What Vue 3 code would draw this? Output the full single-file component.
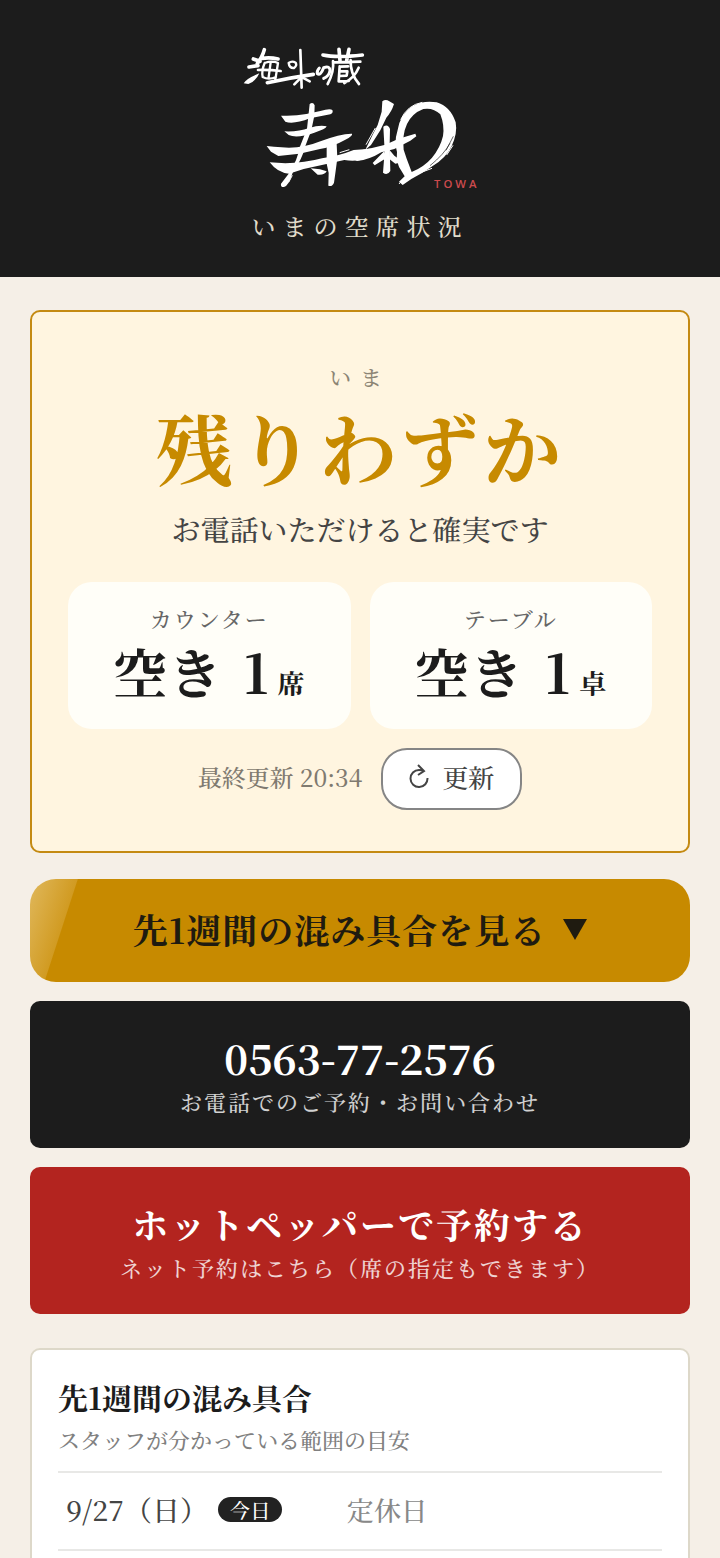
<script setup>
import { ref } from 'vue'

const seats = [
  { label: 'カウンター', count: 1, unit: '席' },
  { label: 'テーブル', count: 1, unit: '卓' },
]
const updated = ref('20:34')
const days = [
  { date: '9/27（日）', today: true, state: '定休日' },
]
</script>

<template>
  <div class="page">
    <header class="header">
      <svg class="logo" viewBox="30 30 720 444" role="img" aria-label="海味の蔵 寿和 TOWA">
        <g fill="none" stroke="#fff" stroke-linecap="round" stroke-linejoin="round" stroke-width="11">
          <path d="M70 72L90 79M57 96L84 92M103 44Q98 64 82 86M96 70Q120 66 144 72" />
          <path d="M104 84Q94 108 98 126Q116 136 138 126M104 84Q126 76 144 84L136 134M122 82L116 126" stroke-width="7" />
          <path d="M84 105Q120 104 152 108" stroke-width="8" />
          <path d="M112 143Q180 128 250 118" />
          <path d="M176 84Q178 100 192 99Q202 92 197 83Q186 76 176 84" stroke-width="7" />
          <path d="M211 45L215 158M213 128L193 148M218 128L239 139" stroke-width="8" />
          <path d="M268 99Q260 107 262 116Q271 124 281 98Q300 91 300 107Q297 123 281 130" stroke-width="9" />
          <path d="M279 60Q320 69 397 60M327 43L330 77M357 43L350 77" stroke-width="11" />
          <path d="M309 78Q313 110 293 147M314 82L391 80M329 94L326 139L356 138M330 95L354 94M330 109L352 109L350 122L330 123M362 75Q360 116 387 147M386 98Q374 127 343 144" stroke-width="8" />
        </g>
        <g fill="#fff">
          <path d="M41 145Q49 130 88 115Q77 140 55 147Z" />
          <path d="M153 242Q194 244 229 237L271 228Q300 219 307 225Q311 233 301 238L240 250Q190 269 166 260Z" />
          <path d="M163 289Q205 291 237 279Q270 269 290 274Q288 282 253 293Q201 311 176 300Z" />
          <path d="M239 207Q249 199 254 211L253 242L244 286L226 333Q217 372 188 413Q176 452 162 456Q151 457 153 446L176 416Q204 373 207 342L231 281Z" />
          <path d="M110 333L132 335L177 338Q226 337 267 320Q334 295 366 296Q369 302 346 314Q309 335 270 342L208 356L145 363L123 350Z" />
          <path d="M119 382L166 385Q224 384 276 370Q329 362 371 345L422 341L407 371Q376 381 343 375L286 388L221 402L177 416Q143 414 119 382Z" />
          <path d="M290 332L320 326L322 370L316 415L312 443Q306 457 295 452L296 414L290 386Z" />
          <path d="M242 400L270 403L290 409Q284 421 263 419Z" />
          <path d="M457 199Q467 191 478 199L492 207Q485 230 469 248L451 286L423 330L406 344L428 299L443 270L455 230Z" />
          <path d="M354 365Q383 344 426 339L466 329L506 311L556 296L559 304L541 317L512 332L493 342L454 352Q419 374 381 378Z" />
          <path d="M460 275Q474 265 480 282L479 328L481 408Q472 423 459 413L464 348Z" />
          <path d="M463 348L428 384L434 391L468 370ZM478 344L493 362L519 381L496 386L478 372Z" />
          <path fill-rule="evenodd" d="M501 351Q492 322 502 289Q510 236 548 213Q581 195 620 202Q661 214 677 262Q683 295 665 333Q648 369 608 393Q577 415 544 432L518 450L507 440L524 424L514 407Q497 385 501 351ZM521 344L530 371L545 411Q583 395 606 368Q631 338 639 303Q644 271 631 238Q610 217 580 222Q546 235 531 267Q516 299 521 344Z" />
        </g>
        <g fill="none" stroke="#fff" stroke-width="3">
          <path d="M512 254Q532 210 577 202M507 447L522 429M542 424L606 400M650 360L669 331M669 269L678 274M525 442L536 426M176 442L187 421M408 329L436 279M329 353L358 344" />
        </g>
        <g fill="none" stroke="#1c1c1c" stroke-width="2">
          <path d="M600 392Q642 358 660 325M648 346L670 304" />
        </g>
        <text x="612" y="459">TOWA</text>
      </svg>
      <h1 class="subtitle">いまの空席状況</h1>
    </header>

    <main class="main">
      <section class="status">
        <p class="now">いま</p>
        <p class="level">残りわずか</p>
        <p class="advice">お電話いただけると確実です</p>
        <div class="seats">
          <div v-for="s in seats" :key="s.label" class="seat">
            <span class="seat-label">{{ s.label }}</span>
            <span class="seat-value">空き <span class="count">{{ s.count }}</span><small>{{ s.unit }}</small></span>
          </div>
        </div>
        <div class="updated">
          <span class="time">最終更新 {{ updated }}</span>
          <button class="refresh" type="button">
            <svg viewBox="0 0 22 24" width="22" height="24" fill="none" stroke="currentColor" stroke-width="2">
              <path d="M18.500 14A8.500 8.500 0 1 1 10 6Q13 6 15 7M9 1L15 7L9 11" />
            </svg>
            更新
          </button>
        </div>
      </section>

      <div class="actions">
        <a class="action week-link" href="#week"><span>先1週間の混み具合を見る</span><svg viewBox="0 0 24 21" width="24" height="21"><path d="M0 0H24L12 21Z" fill="currentColor" /></svg></a>
        <a class="action phone" href="tel:0563-77-2576">
          <strong class="number">0563-77-2576</strong>
          <span class="note">お電話でのご予約・お問い合わせ</span>
        </a>
        <a class="action reserve" href="#reserve">
          <strong class="action-title">ホットペッパーで予約する</strong>
          <span class="note">ネット予約はこちら（席の指定もできます）</span>
        </a>
      </div>

      <section id="week" class="week">
        <h2>先1週間の混み具合</h2>
        <p>スタッフが分かっている範囲の目安</p>
        <table>
          <tbody>
            <tr v-for="d in days" :key="d.date">
              <th scope="row"><span class="day"><span>{{ d.date }}</span><span v-if="d.today" class="today">今日</span></span></th>
              <td>{{ d.state }}</td>
            </tr>
          </tbody>
        </table>
      </section>
    </main>
  </div>
</template>

<style>
body {
  background: #f5efe7;
}
</style>

<style scoped>
.page {
  min-height: 100vh;
  color: #1c1c1c;
  font-family: "Noto Serif JP", "Noto Serif CJK JP", "Liberation Serif", "Noto Sans CJK JP", serif;
  font-weight: 500;
}
.page * {
  box-sizing: border-box;
}
h1, h2, p {
  margin: 0;
  font-weight: 500;
}
.header {
  display: flex;
  flex-direction: column;
  align-items: center;
  gap: 14px;
  padding: 45px 30px 33px;
  background: #1c1c1c;
}
.logo {
  width: 240px;
  height: 148px;
  overflow: visible;
}
.logo text {
  fill: #cc4a4d;
  font-family: "Open Sans", sans-serif;
  font-size: 34px;
  font-weight: 600;
  letter-spacing: 9px;
}
.subtitle {
  color: #e0dccb;
  font-size: 24px;
  line-height: 37px;
  letter-spacing: 7px;
}
.main {
  display: flex;
  flex-direction: column;
  padding: 33px 30px 0;
}
.status {
  display: flex;
  flex-direction: column;
  align-items: center;
  padding: 46px 36px 41px;
  border: 2px solid #c48a12;
  border-radius: 10px;
  background: #fff5e0;
}
.now {
  color: #8c8474;
  font-size: 22px;
  line-height: 38px;
  letter-spacing: 9px;
}
.level {
  margin-bottom: 8px;
  color: #c78a00;
  font-size: 78px;
  font-weight: 700;
  line-height: 100px;
  letter-spacing: 4px;
}
.advice {
  color: #444;
  font-size: 29px;
  line-height: 50px;
}
.seats {
  display: grid;
  grid-template-columns: 1fr 1fr;
  gap: 19px;
  width: 100%;
  margin-top: 28px;
}
.seat {
  display: flex;
  flex-direction: column;
  align-items: center;
  padding: 18px 12px 26px;
  border-radius: 24px;
  background: #fffef8;
}
.seat-label {
  color: #666;
  font-size: 22px;
  line-height: 38px;
  letter-spacing: 2px;
}
.seat-value {
  font-size: 54px;
  font-weight: 700;
  line-height: 65px;
  letter-spacing: 1px;
}
.count {
  margin-left: 6px;
}
.seat-value small {
  margin-left: 8px;
  font-size: 27px;
  line-height: 1;
}
.updated {
  display: flex;
  align-items: center;
  gap: 19px;
  margin-top: 19px;
  color: #7f7a70;
  font-size: 24px;
}
.time {
  padding-bottom: 6px;
}
.refresh {
  display: flex;
  align-items: center;
  gap: 11px;
  height: 62px;
  padding: 0 26px 6px;
  border: 2px solid #858585;
  border-radius: 26px;
  background: #fff;
  color: #444;
  font-family: inherit;
  font-size: 26px;
  font-weight: inherit;
}
.actions {
  display: flex;
  flex-direction: column;
  gap: 19px;
  margin-top: 26px;
}
.action {
  display: flex;
  flex-direction: column;
  align-items: center;
  padding: 32px 20px 27px;
  border-radius: 10px;
  color: #fff;
  text-decoration: none;
}
.week-link {
  flex-direction: row;
  justify-content: center;
  gap: 17px;
  padding: 25px 20px 28px;
  border-radius: 26px;
  background: linear-gradient(108deg, #e0b85c 0, #d19b22 45px, #c78a00 46px);
  color: #1f1b10;
  font-size: 35px;
  font-weight: 700;
  line-height: 50px;
  letter-spacing: 1px;
}
.phone {
  background: #1c1c1c;
}
.reserve {
  background: #b3241f;
}
.number {
  font-size: 41px;
  line-height: 50px;
}
.action-title {
  font-size: 36px;
  line-height: 50px;
  letter-spacing: 2px;
}
.note {
  font-size: 22px;
  line-height: 38px;
  letter-spacing: 2px;
  opacity: 0.8;
}
.week {
  margin-top: 34px;
  padding: 25px 26px 30px;
  border: 2px solid #ddd8c9;
  border-radius: 10px;
  background: #fff;
}
.week h2 {
  font-size: 30px;
  font-weight: 700;
  line-height: 44px;
}
.week p {
  color: #808080;
  font-size: 22px;
  line-height: 42px;
}
.week table {
  width: 100%;
  margin-top: 10px;
  border-collapse: collapse;
  table-layout: fixed;
}
.week th,
.week td {
  height: 78px;
  padding: 0 8px 4px;
  border-top: 2px solid #e8e8e6;
  border-bottom: 2px solid #e8e8e6;
  font-weight: 500;
  text-align: left;
}
.week th {
  width: 281px;
  color: #444;
  font-size: 28px;
}
.week td {
  color: #888;
  font-size: 27px;
}
.day {
  display: flex;
  align-items: center;
  gap: 10px;
}
.today {
  padding: 0 12px;
  border-radius: 13px;
  background: #222;
  color: #fff;
  font-size: 20px;
  line-height: 25px;
}
</style>
